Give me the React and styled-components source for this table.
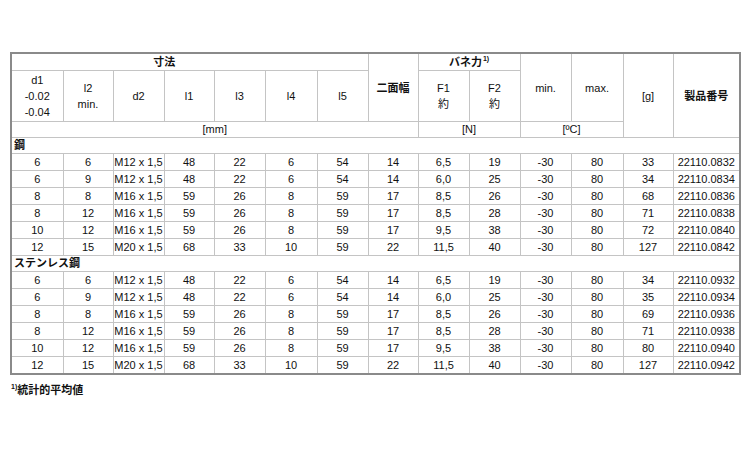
import React from 'react';
import styled, { createGlobalStyle } from 'styled-components';

const GlobalStyle = createGlobalStyle`
    html, body {
        margin: 0;
        padding: 0;
        background: #fff;
    }
    body {
        font-family: "Liberation Sans", Arial, "Noto Sans CJK JP", sans-serif;
        color: #111;
    }
`;

const Page = styled.div`
    width: 750px;
    height: 450px;
    padding: 52px 0 0 10px;
    box-sizing: border-box;
`;

const Table = styled.table`
    border-collapse: collapse;
    table-layout: fixed;
    width: 729px;
    border: 2px solid #8a8a8a;
    font-size: 11px;
`;

const Row = styled.tr`
    height: ${p => p.$h || 17}px;
`;

const Cell = styled.td`
    border: 1px solid #c4c4c4;
    padding: 0;
    text-align: center;
    vertical-align: middle;
    line-height: ${p => p.$lh || 16}px;
    font-weight: ${p => (p.$bold ? 'bold' : 'normal')};
    white-space: nowrap;
    overflow: hidden;
`;

const TitleCell = styled(Cell)`
    padding-right: ${p => p.$shift || 0}px;
`;

const SectionCell = styled.td`
    border: 1px solid #c4c4c4;
    border-left: none;
    border-right: none;
    padding: 0 2px;
    text-align: left;
    font-weight: bold;
    line-height: 15px;
`;

const Sup = styled.sup`
    font-size: 7px;
    vertical-align: top;
    line-height: 8px;
    position: relative;
    top: 1px;
    margin-left: 1px;
`;

const Footnote = styled.div`
    margin-top: 7px;
    font-size: 11px;
    font-weight: bold;
    line-height: 16px;
`;

const widths = [52, 50, 51, 50, 51, 52, 51, 50, 51, 51, 51, 52, 50, 67];

const steel = [
    ['6', '6', 'M12 x 1,5', '48', '22', '6', '54', '14', '6,5', '19', '-30', '80', '33', '22110.0832'],
    ['6', '9', 'M12 x 1,5', '48', '22', '6', '54', '14', '6,0', '25', '-30', '80', '34', '22110.0834'],
    ['8', '8', 'M16 x 1,5', '59', '26', '8', '59', '17', '8,5', '26', '-30', '80', '68', '22110.0836'],
    ['8', '12', 'M16 x 1,5', '59', '26', '8', '59', '17', '8,5', '28', '-30', '80', '71', '22110.0838'],
    ['10', '12', 'M16 x 1,5', '59', '26', '8', '59', '17', '9,5', '38', '-30', '80', '72', '22110.0840'],
    ['12', '15', 'M20 x 1,5', '68', '33', '10', '59', '22', '11,5', '40', '-30', '80', '127', '22110.0842'],
];

const stainless = [
    ['6', '6', 'M12 x 1,5', '48', '22', '6', '54', '14', '6,5', '19', '-30', '80', '34', '22110.0932'],
    ['6', '9', 'M12 x 1,5', '48', '22', '6', '54', '14', '6,0', '25', '-30', '80', '35', '22110.0934'],
    ['8', '8', 'M16 x 1,5', '59', '26', '8', '59', '17', '8,5', '26', '-30', '80', '69', '22110.0936'],
    ['8', '12', 'M16 x 1,5', '59', '26', '8', '59', '17', '8,5', '28', '-30', '80', '71', '22110.0938'],
    ['10', '12', 'M16 x 1,5', '59', '26', '8', '59', '17', '9,5', '38', '-30', '80', '80', '22110.0940'],
    ['12', '15', 'M20 x 1,5', '68', '33', '10', '59', '22', '11,5', '40', '-30', '80', '127', '22110.0942'],
];

const sections = [
    { name: '鋼', rows: steel },
    { name: 'ステンレス鋼', rows: stainless },
];

export default function App() {
    return (
        <Page>
            <GlobalStyle />
            <Table>
                <colgroup>
                    {widths.map((w, i) => <col key={i} style={{ width: w }} />)}
                </colgroup>
                <thead>
                    <Row $h={17}>
                        <TitleCell colSpan={7} $bold $shift={51}>寸法</TitleCell>
                        <Cell rowSpan={2} $bold>二面幅</Cell>
                        <Cell colSpan={2} $bold>バネ力<Sup>1)</Sup></Cell>
                        <Cell rowSpan={2}>min.</Cell>
                        <Cell rowSpan={2}>max.</Cell>
                        <Cell rowSpan={3}>[g]</Cell>
                        <Cell rowSpan={3} $bold>製品番号</Cell>
                    </Row>
                    <Row $h={51}>
                        <Cell>d1<br />-0.02<br />-0.04</Cell>
                        <Cell>l2<br />min.</Cell>
                        <Cell>d2</Cell>
                        <Cell>l1</Cell>
                        <Cell>l3</Cell>
                        <Cell>l4</Cell>
                        <Cell>l5</Cell>
                        <Cell>F1<br />約</Cell>
                        <Cell>F2<br />約</Cell>
                    </Row>
                    <Row $h={16}>
                        <Cell colSpan={8} $lh={15}>[mm]</Cell>
                        <Cell colSpan={2} $lh={15}>[N]</Cell>
                        <Cell colSpan={2} $lh={15}>[ºC]</Cell>
                    </Row>
                </thead>
                <tbody>
                    {sections.map(sec => (
                        <React.Fragment key={sec.name}>
                            <Row $h={16}>
                                <SectionCell colSpan={14}>{sec.name}</SectionCell>
                            </Row>
                            {sec.rows.map((r, idx) => (
                                <Row $h={17} key={`${sec.name}-${idx}`}>
                                    {r.map((v, j) => <Cell key={j}>{v}</Cell>)}
                                </Row>
                            ))}
                        </React.Fragment>
                    ))}
                </tbody>
            </Table>
            <Footnote><Sup>1)</Sup>統計的平均値</Footnote>
        </Page>
    );
}
